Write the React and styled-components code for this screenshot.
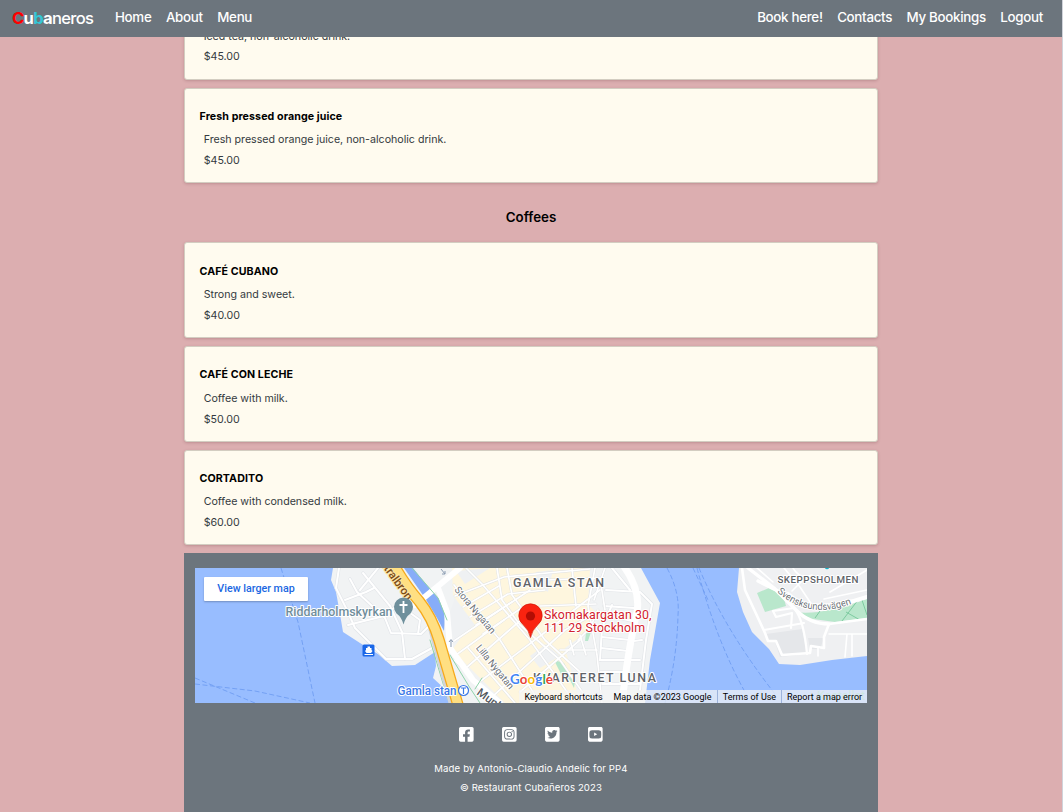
import React from "react";
import styled, { createGlobalStyle, css } from "styled-components";
import {
  FaFacebookSquare,
  FaInstagramSquare,
  FaTwitterSquare,
  FaYoutubeSquare,
} from "react-icons/fa";

const GlobalStyle = createGlobalStyle`
  * { box-sizing: border-box; }
  html, body { margin: 0; height: 100%; overflow: hidden; }
  body {
    background: #dcaeb0;
    font-family: Inter, "Liberation Sans", sans-serif;
    color: #000;
  }
  h2, h3, p { margin: 0; }
`;

const Page = styled.div`
  height: 812px;
  display: flex;
  flex-direction: column;
  overflow: hidden;
  border-right: 1px solid #d0d3da;
`;

const NavBar = styled.header`
  flex: none;
  z-index: 1;
  height: 37px;
  padding: 0 19px 4px 12px;
  display: flex;
  align-items: center;
  background: #6c757d;
`;

const Brand = styled.a`
  width: 103px;
  font-size: 16.6px;
  line-height: 20px;
  letter-spacing: -0.72px;
  color: #fff;
  padding-top: 2px;
`;

const BrandLetter = styled.span`
  font-weight: ${(p) => p.$weight || 700};
  color: ${(p) => p.$color || "#fff"};
`;

const NavGroup = styled.nav`
  display: flex;
  gap: 14.5px;
  margin-left: ${(p) => (p.$end ? "auto" : 0)};
`;

const NavLink = styled.a`
  font-size: 13.33px;
  line-height: 20px;
  font-weight: 500;
  letter-spacing: -0.3px;
  color: #fff;
  white-space: nowrap;
`;

const Main = styled.main`
  width: 694px;
  flex: none;
  margin: -53.1px auto 0;
`;

const Card = styled.article`
  height: 95.8px;
  margin-bottom: 7.9px;
  padding: 21.3px 14.5px 0;
  background: #fffbef;
  border: 1px solid #d3cdc1;
  border-radius: 3px;
  box-shadow: 0 1px 3px rgba(80, 30, 40, 0.22);
`;

const CardTitle = styled.h3`
  font-size: 10.67px;
  line-height: 14px;
  font-weight: 700;
  letter-spacing: 0.09px;
`;

const CardText = styled.p`
  padding-left: 4.2px;
  margin-top: ${(p) => (p.$first ? 9.4 : 6.9)}px;
  font-size: 10.67px;
  line-height: 14px;
  letter-spacing: -0.01px;
  color: #343a40;
`;

const SectionTitle = styled.h2`
  padding: 17.5px 0 17.5px;
  font-size: 13.33px;
  line-height: 16px;
  font-weight: 600;
  text-align: center;
`;

const Footer = styled.footer`
  height: 270px;
  padding: 15px 11px 0;
  background: #6c757d;
  color: #fff;
  display: flex;
  flex-direction: column;
  align-items: center;
`;

const MapFrame = styled.div`
  position: relative;
  width: 672px;
  height: 135px;
  overflow: hidden;
  font-family: Roboto, sans-serif;
`;

const MapSvg = styled.svg`
  display: block;
  font-family: Roboto, sans-serif;
`;

const LargerMap = styled.a`
  position: absolute;
  left: 9px;
  top: 9px;
  width: 104px;
  height: 24px;
  line-height: 23px;
  text-align: center;
  font-size: 10.7px;
  font-weight: 500;
  color: #1a67e2;
  background: #fff;
  border-radius: 1px;
  box-shadow: 0 1px 2px rgba(0, 0, 0, 0.25);
`;

const Attribution = styled.div`
  position: absolute;
  right: 0;
  bottom: 0;
  display: flex;
  height: 13px;
  line-height: 14px;
  font-size: 9px;
  color: #000;
  white-space: nowrap;
`;

const Credit = styled.span`
  width: ${(p) => p.$w}px;
  text-align: center;
  background: rgba(245, 245, 245, 0.7);
  ${(p) =>
    p.$divided &&
    css`
      border-left: 1px solid #9db3dc;
    `}
`;

const Socials = styled.div`
  display: flex;
  gap: 28.3px;
  margin-top: 23.1px;
  svg {
    display: block;
    width: 14.67px;
    height: 16.7px;
  }
`;

const FooterLine = styled.p`
  margin-top: ${(p) => p.$gap}px;
  font-size: 9.6px;
  line-height: 14px;
  letter-spacing: 0.12px;
`;

const Halo = styled.text`
  paint-order: stroke;
  stroke: ${(p) => p.$halo || "#fff"};
  stroke-width: 2px;
  stroke-linejoin: round;
`;

const coffees = [
  ["CAFÉ CUBANO", "Strong and sweet.", "$40.00"],
  ["CAFÉ CON LECHE", "Coffee with milk.", "$50.00"],
  ["CORTADITO", "Coffee with condensed milk.", "$60.00"],
];

function Item({ name, text, price }) {
  return (
    <Card>
      <CardTitle>{name}</CardTitle>
      <CardText $first>{text}</CardText>
      <CardText>{price}</CardText>
    </Card>
  );
}

const narrowStreets = [
  "M454 585L500 640L540 703",
  "M466 568L482 584L530 640L575 703",
  "M497 568L502 600L520 625L560 660L590 703",
  "M507 568L512 595L545 640L580 672",
  "M455 596L504 577L590 569",
  "M463 607L499 586",
  "M470 617L508 594L545 590",
  "M476 625L512 602",
  "M483 634L520 609",
  "M448 645L482 622L530 590",
  "M456 655L504 620",
  "M466 668L530 612",
  "M478 683L548 630L600 590",
  "M492 697L565 630L598 612",
  "M520 692L580 640",
  "M454 660L500 703",
  "M468 648L515 703",
  "M545 580L600 578L605 610",
  "M540 606L596 604",
  "M595 568L588 606L597 655L602 703",
  "M572 568L576 606",
  "M605 568L594 600",
  "M578 640L590 628L598 610",
  "M560 650L597 650",
  "M570 640L574 655M580 635L586 655",
];

const eastStreets = [
  "M606 590L640 592L652 604L646 640L640 690",
  "M604 606L634 608",
  "M606 615L632 621",
  "M604 626L631 630",
  "M602 637L630 640",
  "M601 648L628 651",
  "M600 660L628 660",
  "M600 672L626 672",
  "M601 684L640 684",
  "M612 605L602 628L600 660",
  "M642 640L634 641M640 660L630 660",
  "M612 568L630 590",
];

const westStreets = [
  "M339 568L336 588L347 610L355 628L386 659L412 659L432 648",
  "M350 579L357 592L385 618L391 633L421 634L430 625",
  "M363 573L390 606L402 632L405 659",
  "M378 568L360 590M345 600L366 592L374 588",
  "M348 625L384 616L394 608",
  "M406 610L420 620L418 634",
];

function CityMap() {
  return (
    <MapSvg width="672" height="135" viewBox="195 568 672 135">
      <rect x="195" y="568" width="672" height="135" fill="#98bdff" />
      <g fill="none" stroke="#6f9df2" strokeWidth="0.9" strokeDasharray="5 2.5">
        <path d="M281 568L298 622L315 703" />
        <path d="M195 678L255 703" />
        <path d="M195 684L255 691L310 703" />
        <path d="M667 568Q680 592 678 615Q677 660 665 703" />
        <path d="M697 568Q716 640 745 692" />
        <path d="M699 568Q725 630 775 694" />
        <path d="M693 568L708 600" />
      </g>

      <path d="M333 568L331 580L336 592L340 614L343 632L360 643L378 654L392 666L415 665L435 652L436 666L433 678L446 690L451 703H645L650 660L660 603L641 568Z" fill="#f1f3f4" />
      <path d="M452 568H590L588 605L596 612L590 630L565 648L580 703H505L452 650L470 625L453 595Z" fill="#fef6de" />
      <path d="M456 571L490 568L465 584ZM455 598L475 625L455 640L447 620ZM536 572L553 570L548 592L537 585ZM546 644L560 656L540 668L530 656Z" fill="#eff1f3" />
      <path d="M404 568H413L425 583L440 600L445 613L444 631L437 618L425 598Z" fill="#87adf8" />
      <path d="M554 660L564 663L572 680L563 678ZM586 633L591 632L588 641H585ZM568 676L576 674L574 688Z" fill="#b9e7cc" />

      <g fill="none" strokeLinejoin="round" strokeLinecap="round">
        <g stroke="#e1e4e8" strokeWidth="3.2">
          {[...westStreets, ...eastStreets].map((d) => <path key={d} d={d} />)}
        </g>
        <g stroke="#fff" strokeWidth="2">
          {[...westStreets, ...eastStreets].map((d) => <path key={d} d={d} />)}
        </g>
        <g stroke="#e0e2e4" strokeWidth="2.6">
          {narrowStreets.map((d) => <path key={d} d={d} />)}
        </g>
        <g stroke="#fff" strokeWidth="1.7">
          {narrowStreets.map((d) => <path key={d} d={d} />)}
        </g>
        <path d="M623 565Q641 590 637 612Q628 650 622 703" stroke="#fff" strokeWidth="7" />
        <path d="M460 568L415 605M438 588L447 612L450 648L473 680L500 703" stroke="#fff" strokeWidth="6" />
        <path d="M412 568L438 598L447 620M450 655L470 688L480 703M430 640L448 700M475 689L482 678" stroke="#8fd3aa" strokeWidth="1" />
        <path d="M430 630L450 703" stroke="#d1d5d9" strokeWidth="3" />
        <path d="M391 560Q404 584 419 601Q432 617 439 640L460 712" stroke="#f6a91b" strokeWidth="11.5" />
        <path d="M391 560Q404 584 419 601Q432 617 439 640L460 712" stroke="#ffdf82" strokeWidth="9" />
      </g>

      <path d="M739 568L737 592L743 612L752 632L769 649L779 664L800 665L832 660L867 656V568Z" fill="#eff0f2" />
      <path d="M766 634L802 629L807 654L780 657L775 642L768 641ZM808 638H824L820 649H810Z" fill="#e5e7ea" />
      <path d="M757 593L769 588L783 595L786 606L765 612ZM795 612Q820 616 867 599V618L835 622L813 619Z" fill="#b9e7cc" />
      <path d="M842 621L858 600M862 600L867 615M846 612L860 620M815 618L820 611" stroke="#7dcba0" fill="none" />
      <g fill="none" stroke="#fff" strokeWidth="2.2" strokeLinejoin="round" strokeLinecap="round">
        <path d="M742 568L745 590L765 633L768 641L776 641L782 655L810 653L811 646L824 648L824 637L829 624L867 619" strokeWidth="2.6" />
        <path d="M748 568L774 588L796 610Q810 624 829 624M758 581L780 592" strokeWidth="3.4" />
        <path d="M796 611Q804 622 807 654M764 630L804 623M773 611L794 608M773 611L776 617L792 613L791 628" />
        <path d="M784 568L800 587L812 605M757 568L773 582M793 568Q800 580 812 575M830 592L867 570M824 599L867 590M829 634H867M847 634L845 657M818 648V656M852 634V656M802 581L792 591" strokeWidth="1.6" />
        <path d="M788 594Q810 616 867 597" strokeWidth="4" />
      </g>
      <circle cx="827" cy="567" r="2.2" fill="#12b5cb" />

      <g fill="#5f6368" fontWeight="500">
        <Halo x="513" y="587" fontSize="12.4" textLength="91">GAMLA STAN</Halo>
        <Halo x="533" y="681.500" fontSize="12.4" textLength="123">KVARTERET LUNA</Halo>
        <Halo x="777.5" y="582.500" fontSize="9.8" textLength="81">SKEPPSHOLMEN</Halo>
      </g>
      <g fill="#6d7277" fontSize="9.8">
        <Halo transform="translate(454 590) rotate(50)" textLength="58">Stora Nygatan</Halo>
        <Halo transform="translate(475.500 648) rotate(51)" textLength="54">Lilla Nygatan</Halo>
        <Halo transform="translate(476 694) rotate(36)" fontSize="11.5" fontWeight="500" fill="#55595e">Munkbron</Halo>
        <path id="svensk" d="M777 592Q809 621 854 603" fill="none" />
        <Halo fontSize="9.8"><textPath href="#svensk" textLength="80">Svensksundsvägen</textPath></Halo>
      </g>
      <Halo transform="translate(407 601) rotate(54)" textAnchor="end" fontSize="11.5" fontWeight="500" fill="#7b4b18" $halo="#ffe6a4">Centralbron</Halo>

      <Halo x="285.500" y="616" fontSize="12.8" fontWeight="500" textLength="107" lengthAdjust="spacingAndGlyphs" fill="#6f8e9b">Riddarholmskyrkan</Halo>
      <path d="M403.500 624.500Q401.500 617 396.500 613.500A9.500 9.500 0 1 1 410.500 613.500Q405.500 617 403.500 624.500Z" fill="#6f909c" />
      <path d="M403.500 601V613M399.500 605H407.500" stroke="#fff" strokeWidth="1.8" />

      <rect x="362.500" y="644.500" width="12" height="12" rx="1.500" fill="#1a67e8" />
      <path d="M366 650V648H367.500V646.500H370V648H371.500V650L372.500 651L371 653H366.500L365 651ZM364.500 654H373V655H364.500Z" fill="#fff" />

      <Halo x="397.500" y="695" fontSize="12" fontWeight="500" textLength="59" lengthAdjust="spacingAndGlyphs" fill="#3b78e7">Gamla stan</Halo>
      <circle cx="463.500" cy="690.500" r="5" fill="#fff" stroke="#3b78e7" strokeWidth="1.2" />
      <path d="M461 688H466M463.500 688V694" stroke="#3b78e7" strokeWidth="1.2" />
      <path d="M451 647V640M449 642L451 639.500L453 642M441 569L445 574M442 574H445V571" stroke="#8b9cb2" fill="none" />

      <path d="M530.500 637.500Q529 630 523 624.500A11.700 11.700 0 1 1 538 624.500Q532 630 530.500 637.500Z" fill="#fa2310" stroke="#d01808" strokeWidth="0.7" />
      <circle cx="530.500" cy="616" r="4.600" fill="#b30d04" />
      <g fontSize="12.4" fill="#d2222d">
        <Halo x="544" y="619" textLength="107.500">Skomakargatan 30,</Halo>
        <Halo x="544" y="631.500" textLength="101">111 29 Stockholm</Halo>
      </g>
      <Halo x="510" y="684" fontSize="13.500" textLength="43" fontFamily="Lato, sans-serif" fontWeight="700">
        <tspan fill="#4285f4">G</tspan>
        <tspan fill="#ea4335">o</tspan>
        <tspan fill="#fbbc05">o</tspan>
        <tspan fill="#4285f4">g</tspan>
        <tspan fill="#34a853">l</tspan>
        <tspan fill="#ea4335">e</tspan>
      </Halo>
      <text x="817" y="700" fontSize="12" fill="#70c2b5" textLength="48">Kastellet</text>
    </MapSvg>
  );
}

export default function App() {
  return (
    <>
      <GlobalStyle />
      <Page>
        <NavBar>
          <Brand>
            <BrandLetter $color="#f00">C</BrandLetter>
            <BrandLetter>u</BrandLetter>
            <BrandLetter $color="#35c5d5">b</BrandLetter>
            <BrandLetter>a</BrandLetter>
            <BrandLetter $weight={500}>neros</BrandLetter>
          </Brand>
          <NavGroup>
            <NavLink>Home</NavLink>
            <NavLink>About</NavLink>
            <NavLink>Menu</NavLink>
          </NavGroup>
          <NavGroup $end>
            <NavLink>Book here!</NavLink>
            <NavLink>Contacts</NavLink>
            <NavLink>My Bookings</NavLink>
            <NavLink>Logout</NavLink>
          </NavGroup>
        </NavBar>
        <Main>
          <Item name="Iced tea" text="Iced tea, non-alcoholic drink." price="$45.00" />
          <Item
            name="Fresh pressed orange juice"
            text="Fresh pressed orange juice, non-alcoholic drink."
            price="$45.00"
          />
          <SectionTitle>Coffees</SectionTitle>
          {coffees.map(([name, text, price]) => (
            <Item key={name} name={name} text={text} price={price} />
          ))}
          <Footer>
            <MapFrame>
              <CityMap />
              <LargerMap>View larger map</LargerMap>
              <Attribution>
                <Credit $w={89}>Keyboard shortcuts</Credit>
                <Credit $w={109}>Map data ©2023 Google</Credit>
                <Credit $w={64} $divided>Terms of Use</Credit>
                <Credit $w={86} $divided>Report a map error</Credit>
              </Attribution>
            </MapFrame>
            <Socials>
              <FaFacebookSquare />
              <FaInstagramSquare />
              <FaTwitterSquare />
              <FaYoutubeSquare />
            </Socials>
            <FooterLine $gap={19.1}>Made by Antonio-Claudio Andelic for PP4</FooterLine>
            <FooterLine $gap={5}>© Restaurant Cubañeros 2023</FooterLine>
          </Footer>
        </Main>
      </Page>
    </>
  );
}
